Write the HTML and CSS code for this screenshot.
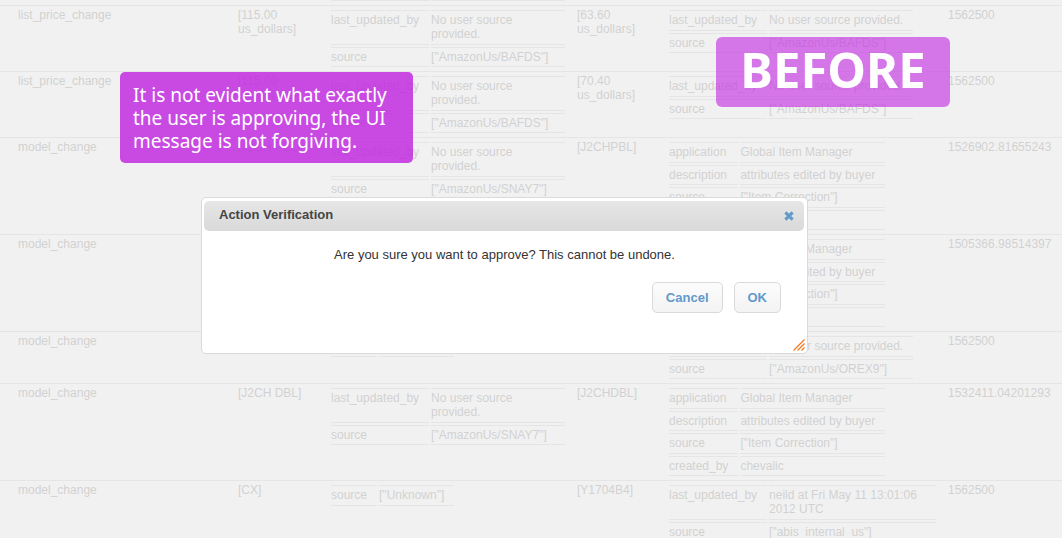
FILE: index.html
```html
<!DOCTYPE html>
<html lang="en">
<head>
<meta charset="utf-8">
<title>Action Verification</title>
<link rel="stylesheet" href="styles.css">
</head>
<body>
<main class="page">
  <table class="changes">
    <colgroup>
      <col class="col-type"><col class="col-before"><col class="col-before-meta"><col class="col-after"><col class="col-after-meta"><col>
    </colgroup>
    <tbody>
      <tr class="partial">
        <td></td><td></td>
        <td><table class="meta"><tr><td></td><td></td></tr></table></td>
        <td></td><td></td><td></td>
      </tr>
      <tr>
        <td class="type">list_price_change</td>
        <td>[115.00 us_dollars]</td>
        <td><table class="meta"><tr><td>last_updated_by</td><td>No user source provided.</td></tr><tr><td>source</td><td>["AmazonUs/BAFDS"]</td></tr></table></td>
        <td>[63.60 us_dollars]</td>
        <td><table class="meta"><tr><td>last_updated_by</td><td>No user source provided.</td></tr><tr><td>source</td><td>["AmazonUs/BAFDS"]</td></tr></table></td>
        <td>1562500</td>
      </tr>
      <tr>
        <td class="type">list_price_change</td>
        <td>[115.00 us_dollars]</td>
        <td><table class="meta"><tr><td>last_updated_by</td><td>No user source provided.</td></tr><tr><td>source</td><td>["AmazonUs/BAFDS"]</td></tr></table></td>
        <td>[70.40 us_dollars]</td>
        <td><table class="meta"><tr><td>last_updated_by</td><td>No user source provided.</td></tr><tr><td>source</td><td>["AmazonUs/BAFDS"]</td></tr></table></td>
        <td>1562500</td>
      </tr>
      <tr>
        <td class="type">model_change</td>
        <td>[J2CH PBL]</td>
        <td><table class="meta"><tr><td>last_updated_by</td><td>No user source provided.</td></tr><tr><td>source</td><td>["AmazonUs/SNAY7"]</td></tr></table></td>
        <td>[J2CHPBL]</td>
        <td><table class="meta"><tr><td>application</td><td>Global Item Manager</td></tr><tr><td>description</td><td>attributes edited by buyer</td></tr><tr><td>source</td><td>["Item Correction"]</td></tr><tr><td>created_by</td><td>chevalic</td></tr></table></td>
        <td>1526902.81655243</td>
      </tr>
      <tr>
        <td class="type">model_change</td>
        <td></td>
        <td></td>
        <td></td>
        <td><table class="meta"><tr><td>application</td><td>Global Item Manager</td></tr><tr><td>description</td><td>attributes edited by buyer</td></tr><tr><td>source</td><td>["Item Correction"]</td></tr><tr><td>created_by</td><td>chevalic</td></tr></table></td>
        <td>1505366.98514397</td>
      </tr>
      <tr>
        <td class="type">model_change</td>
        <td></td>
        <td><table class="meta"><tr><td>source</td><td>["Unknown"]</td></tr></table></td>
        <td></td>
        <td><table class="meta"><tr><td>last_updated_by</td><td>No user source provided.</td></tr><tr><td>source</td><td>["AmazonUs/OREX9"]</td></tr></table></td>
        <td>1562500</td>
      </tr>
      <tr>
        <td class="type">model_change</td>
        <td>[J2CH DBL]</td>
        <td><table class="meta"><tr><td>last_updated_by</td><td>No user source provided.</td></tr><tr><td>source</td><td>["AmazonUs/SNAY7"]</td></tr></table></td>
        <td>[J2CHDBL]</td>
        <td><table class="meta"><tr><td>application</td><td>Global Item Manager</td></tr><tr><td>description</td><td>attributes edited by buyer</td></tr><tr><td>source</td><td>["Item Correction"]</td></tr><tr><td>created_by</td><td>chevalic</td></tr></table></td>
        <td>1532411.04201293</td>
      </tr>
      <tr>
        <td class="type">model_change</td>
        <td>[CX]</td>
        <td><table class="meta"><tr><td>source</td><td>["Unknown"]</td></tr></table></td>
        <td>[Y1704B4]</td>
        <td><table class="meta"><tr><td>last_updated_by</td><td>neild at Fri May 11 13:01:06 2012 UTC</td></tr><tr><td>source</td><td>["abis_internal_us"]</td></tr></table></td>
        <td>1562500</td>
      </tr>
    </tbody>
  </table>

  <p class="note">It is not evident what exactly<br>the user is approving, the UI<br>message is not forgiving.</p>
  <p class="stamp">BEFORE</p>

  <section class="dialog" role="dialog" aria-labelledby="dialog-title">
    <header class="dialog-head">
      <h1 class="dialog-title" id="dialog-title">Action Verification</h1>
      <button class="close" type="button" aria-label="Close">
        <svg width="10" height="10" viewBox="0 0 10 10"><path d="M1.4 1.4 8.6 8.6M8.6 1.4 1.4 8.6" stroke="#6199cb" stroke-width="3"/></svg>
      </button>
    </header>
    <p class="message">Are you sure you want to approve? This cannot be undone.</p>
    <div class="actions">
      <button class="btn" type="button">Cancel</button>
      <button class="btn" type="button">OK</button>
    </div>
    <svg class="grip" width="12" height="12" viewBox="0 0 12 12"><path d="M.5 11.5 11.5.5M4.5 11.5l7-7M8.5 11.5l3-3" stroke="#f5761a" stroke-width="1.2"/></svg>
  </section>
</main>
</body>
</html>
```
FILE: styles.css
```css
body {
  margin: 0;
  background: #f1f1f1;
  font-family: "Liberation Sans", Arial, sans-serif;
  font-size: 12px;
  line-height: 14px;
  color: #d1d1d1;
}

.page {
  position: relative;
  height: 100vh;
  overflow: hidden;
}

table {
  font-size: 12px;
}

.changes {
  width: 100%;
  table-layout: fixed;
  border-collapse: separate;
  border-spacing: 0;
}

.col-type { width: 238px; }
.col-before { width: 91px; }
.col-before-meta { width: 248px; }
.col-after { width: 90px; }
.col-after-meta { width: 281px; }

.changes > tbody > tr > td {
  padding: 2px 10px 2px 0;
  border-top: 1px solid #e5e5e5;
  vertical-align: top;
}

.changes > tbody > tr > td.type { padding-left: 18px; }

.meta {
  border-collapse: separate;
  border-spacing: 2px;
}

.meta td {
  padding: 2px 10px 2px 0;
  border-top: 1px solid #e5e5e5;
  border-bottom: 1px solid #e5e5e5;
  vertical-align: top;
}

.meta tr:nth-child(odd) td { padding-bottom: 3px; }

.changes > tbody > tr.partial > td {
  padding: 0 10px 4px 0;
  border-top: 0;
}

.partial .meta {
  width: 100%;
  border-spacing: 2px 0;
}

.changes .partial .meta tr:nth-child(odd) td {
  padding: 0;
  border-top: 0;
}

.partial .meta td:first-child { width: 98px; }

.note,
.stamp {
  position: absolute;
  margin: 0;
  color: #fff;
  font-family: "Noto Sans", "Open Sans", sans-serif;
}

.note {
  left: 120px;
  top: 72px;
  width: 280px;
  padding: 12px 0 10px 13px;
  border-radius: 5px;
  background: rgba(191, 32, 224, 0.8);
  font-size: 19px;
  line-height: 23px;
}

.stamp {
  left: 716px;
  top: 37px;
  width: 234px;
  padding-bottom: 6px;
  border-radius: 6px;
  background: rgba(195, 36, 226, 0.6);
  font-size: 49px;
  font-weight: 700;
  line-height: 64px;
  text-align: center;
}

.dialog {
  position: absolute;
  left: 201px;
  top: 197px;
  width: 601px;
  padding: 3px 2px 40px;
  border: 1px solid #dadada;
  border-radius: 5px;
  background: #fff;
  color: #333;
  font-size: 13px;
  line-height: 16px;
}

.dialog-head {
  display: flex;
  align-items: center;
  justify-content: space-between;
  height: 30px;
  margin-right: 1px;
  padding: 0 10px 0 15px;
  border-radius: 5px;
  background: linear-gradient(#e6e6e6, #d9d9d9);
}

.dialog-title {
  margin: 0 0 3px;
  color: #444;
  font-size: 13px;
  font-weight: 700;
}

.close {
  display: flex;
  padding: 0;
  border: 0;
  background: none;
}

.message {
  margin: 16px 0 19px;
  text-align: center;
}

.actions {
  display: flex;
  justify-content: flex-end;
  gap: 11px;
  padding-right: 24px;
}

.btn {
  padding: 7px 13px;
  border: 1px solid #dadada;
  border-radius: 5px;
  background: linear-gradient(#fcfcfc, #f3f3f3);
  color: #6199cb;
  font-family: inherit;
  font-size: 13px;
  font-weight: 700;
  line-height: 15px;
}

.grip {
  position: absolute;
  right: 2px;
  bottom: 2px;
  fill: none;
}
```
